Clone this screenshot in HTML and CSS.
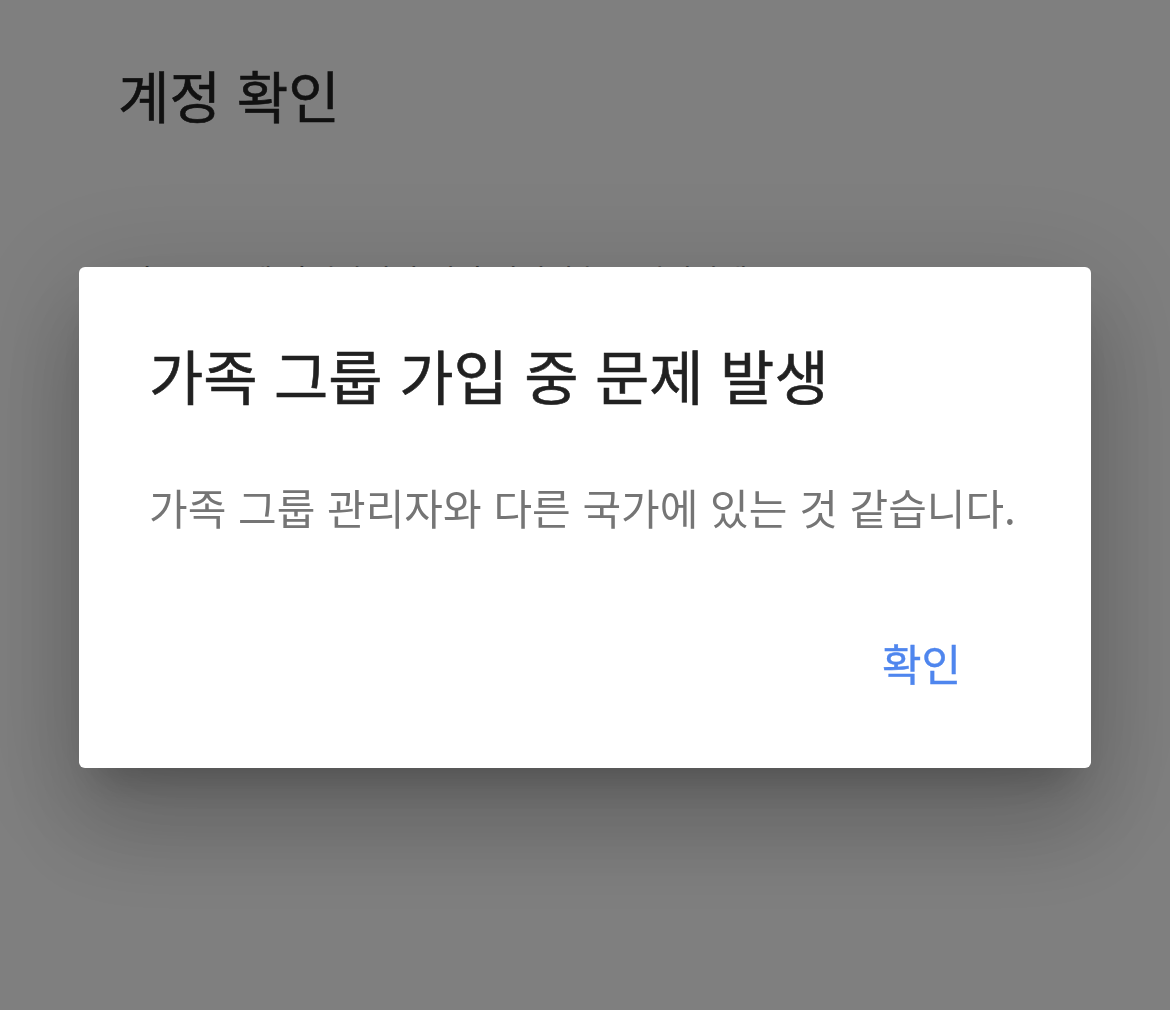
FILE: index.html
```html
<!DOCTYPE html>
<html lang="ko">
<head>
<meta charset="utf-8">
<title>계정 확인</title>
<link rel="stylesheet" href="styles.css">
</head>
<body>
<div class="page">
  <h1 class="page-title">계정 확인</h1>
  <p class="page-text">가족 그룹에 가입하려면 계정 비밀번호를 입력하세요</p>
</div>
<div class="overlay">
  <div class="dialog" role="dialog">
    <h2 class="dialog-title">가족 그룹 가입 중 문제 발생</h2>
    <p class="dialog-body">가족 그룹 관리자와 다른 국가에 있는 것 같습니다.</p>
    <div class="dialog-actions">
      <button class="btn-text">확인</button>
    </div>
  </div>
</div>
</body>
</html>
```

FILE: styles.css
```css
html, body {
  margin: 0;
  padding: 0;
  background: #ffffff;
  font-family: "Noto Sans CJK KR", "Noto Sans", sans-serif;
  height: 100%;
  overflow: hidden;
}

.page {
  padding: 56px 0 0 118px;
}

.page-title {
  margin: 0;
  font-size: 56px;
  font-weight: 400;
  line-height: 76px;
  color: #222222;
  -webkit-text-stroke: 0.6px #222222;
}

.page-text {
  margin: 126px 0 0 8px;
  font-size: 30px;
  line-height: 40px;
  color: #666666;
}

.overlay {
  position: fixed;
  inset: 0;
  background: rgba(0, 0, 0, 0.5);
  display: flex;
  justify-content: center;
  align-items: flex-start;
  padding-top: 267px;
}

.dialog {
  width: 1012px;
  height: 501px;
  box-sizing: border-box;
  background: #ffffff;
  border-radius: 6px;
  padding: 70px 0 0 70px;
  box-shadow:
    0 28px 38px -18px rgba(0, 0, 0, 0.2),
    0 60px 95px 8px rgba(0, 0, 0, 0.14),
    0 22px 115px 20px rgba(0, 0, 0, 0.12);
  display: flex;
  flex-direction: column;
}

.dialog-title {
  margin: 0;
  font-size: 59px;
  font-weight: 400;
  line-height: 76px;
  color: #212121;
  -webkit-text-stroke: 0.6px #212121;
}

.dialog-body {
  margin: 66px 0 0 0;
  font-size: 42px;
  font-weight: 400;
  line-height: 56px;
  color: #757575;
}

.dialog-actions {
  display: flex;
  justify-content: flex-end;
  padding-right: 130px;
  margin-top: 99px;
}

.btn-text {
  border: none;
  background: none;
  padding: 0;
  font-family: inherit;
  font-size: 43px;
  line-height: 56px;
  font-weight: 400;
  color: #4f86ee;
  -webkit-text-stroke: 0.4px #4f86ee;
  cursor: pointer;
}
```
